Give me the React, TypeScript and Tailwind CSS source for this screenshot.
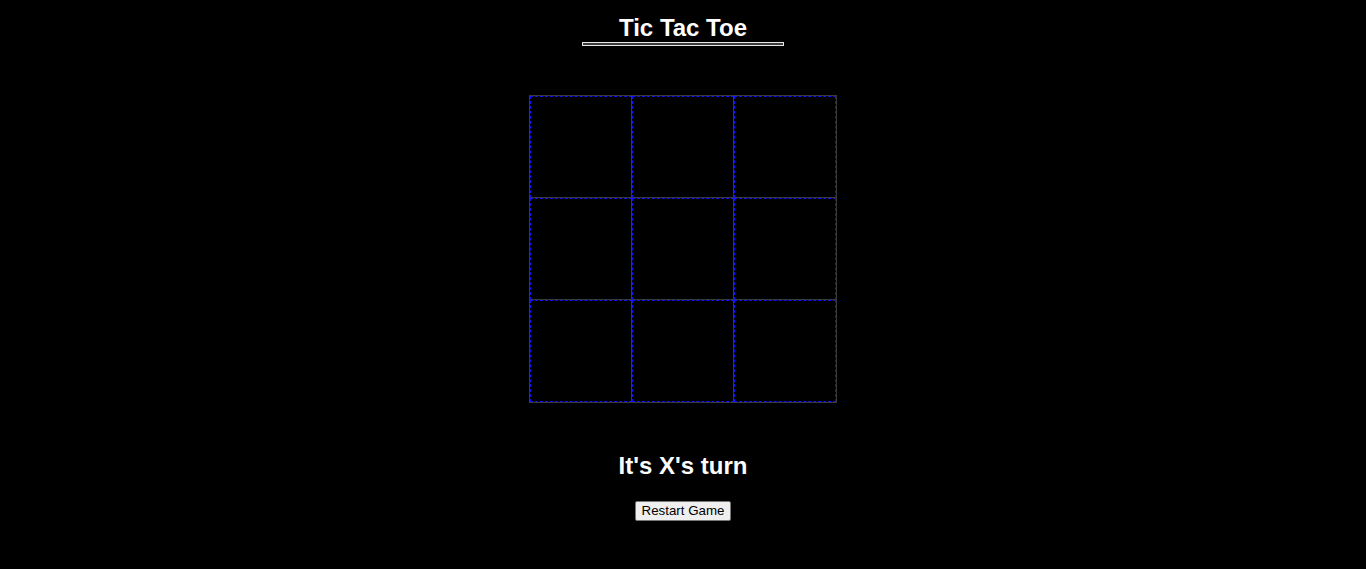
export default function App() {
  const cells = Array.from({ length: 9 }, (_, i) => i);

  return (
    <div className="min-h-screen bg-black flex flex-col items-center text-white font-['Liberation_Sans',Arial,sans-serif]">
      {/* Title */}
      <h1 className="mt-[14px] text-[24px] leading-[28px] font-bold">Tic Tac Toe</h1>
      <div className="h-[4px] w-[202px] border border-[#e5e5e5] bg-[#3a3a3a]" />

      {/* Board */}
      <div className="mt-[49px] grid grid-cols-[repeat(3,102px)] border border-[#3a3a3a]">
        {cells.map((i) => (
          <div
            key={i}
            className={
              'h-[102px] w-[102px] border border-dashed border-[#1010ff] ' +
              (i % 3 !== 2 ? '[border-right-style:solid] border-r-[#3a3a3a] ' : '') +
              (i < 6 ? '[border-bottom-style:solid] border-b-[#3a3a3a]' : '')
            }
          />
        ))}
      </div>

      {/* Status */}
      <h2 className="mt-[49px] text-[24px] leading-[28px] font-bold">It's X's turn</h2>
      <button className="mt-[21px] rounded-[2px] border border-[#767676] bg-[#efefef] px-[6px] py-[1px] text-[13.33px] leading-[16px] text-black">
        Restart Game
      </button>
    </div>
  );
}
